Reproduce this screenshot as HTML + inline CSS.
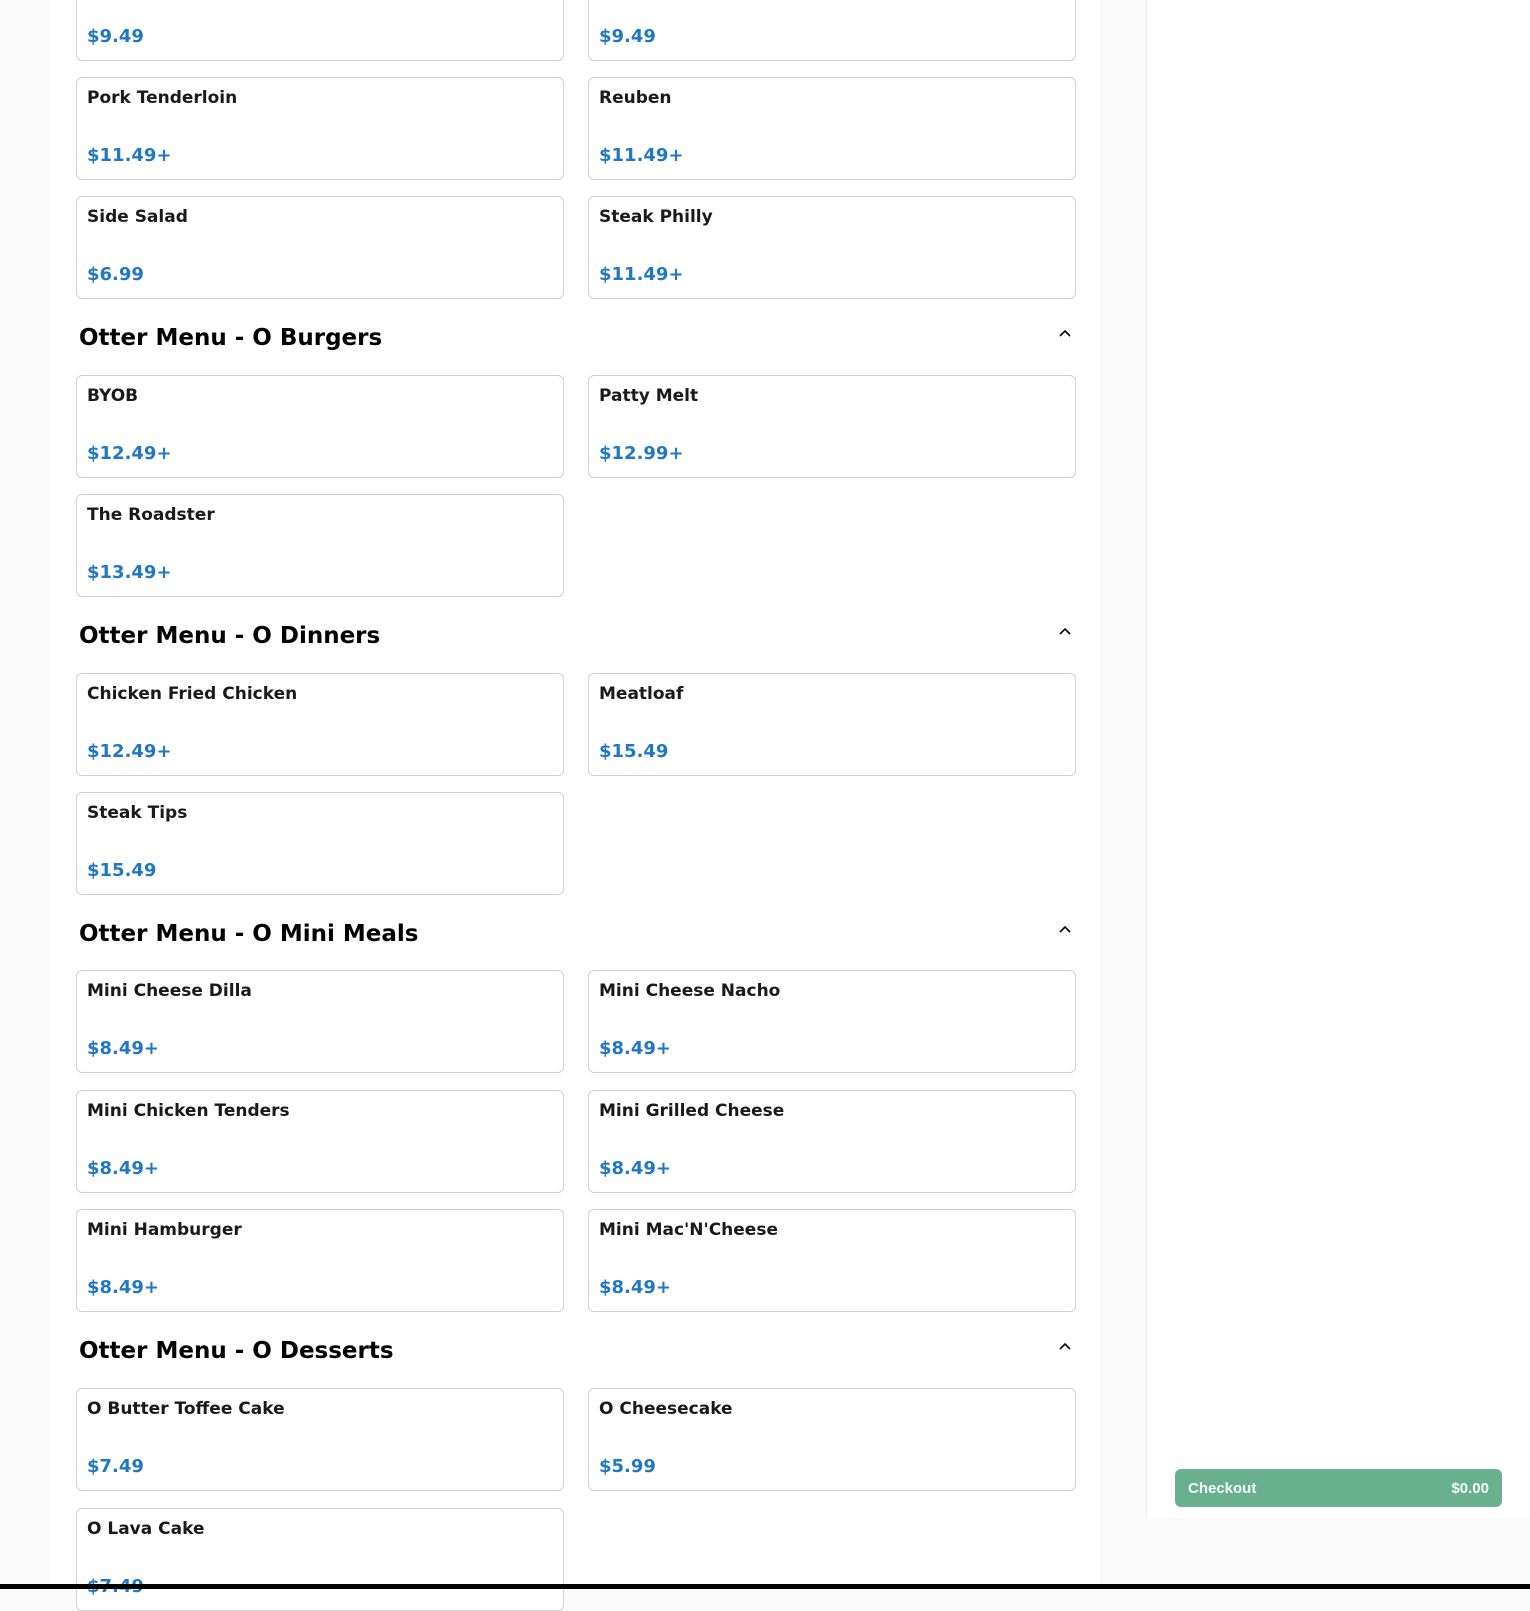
<!DOCTYPE html>
<html><head><meta charset="utf-8"><style>
*{box-sizing:border-box;margin:0;padding:0}
body{width:1530px;height:1589px;background:#fafafa;position:relative;overflow:hidden;font-family:"DejaVu Sans","Liberation Sans",sans-serif}
.main{position:absolute;left:51px;top:0;width:1049px;height:1589px;background:#fff}
.side{position:absolute;left:1146px;top:0;width:384px;height:1518px;background:#fff;border-left:1px solid #f0f0f0}
.card{position:absolute;width:488px;height:103px;border:1px solid #d0d0d0;border-radius:6px;background:#fff}
.card .t{position:absolute;left:10px;top:10px;font-weight:bold;font-size:17px;color:#1a1a1a}
.card .p{position:absolute;left:10px;top:67px;font-weight:bold;font-size:18px;color:#1f77c6}
.h{position:absolute;left:79px;font-weight:bold;font-size:23px;color:#000}
.chev{position:absolute;left:1058px;width:14px;height:10px}
.btn{position:absolute;left:1175px;top:1469px;width:327px;height:38px;background:#68b08e;border-radius:6px;color:#f4fbf7;font-family:"Liberation Sans",sans-serif;font-weight:bold;font-size:15px;display:flex;justify-content:space-between;align-items:center;padding:0 13px}
.bar{position:absolute;left:0;top:1584px;width:1530px;height:5px;background:#000}
</style></head><body>
<div class="main"></div>
<div class="side"></div>

<div class="card" style="left:76px;top:-42px"><div class="p">$9.49</div></div>
<div class="card" style="left:588px;top:-42px"><div class="p">$9.49</div></div>
<div class="card" style="left:76px;top:77px"><div class="t">Pork Tenderloin</div><div class="p">$11.49+</div></div>
<div class="card" style="left:588px;top:77px"><div class="t">Reuben</div><div class="p">$11.49+</div></div>
<div class="card" style="left:76px;top:196px"><div class="t">Side Salad</div><div class="p">$6.99</div></div>
<div class="card" style="left:588px;top:196px"><div class="t">Steak Philly</div><div class="p">$11.49+</div></div>

<div class="h" style="top:325px">Otter Menu - O Burgers</div>
<svg class="chev" style="top:328px" viewBox="0 0 14 10"><path d="M2 8 L7 3 L12 8" fill="none" stroke="#000" stroke-width="1.6"/></svg>
<div class="card" style="left:76px;top:375px"><div class="t">BYOB</div><div class="p">$12.49+</div></div>
<div class="card" style="left:588px;top:375px"><div class="t">Patty Melt</div><div class="p">$12.99+</div></div>
<div class="card" style="left:76px;top:494px"><div class="t">The Roadster</div><div class="p">$13.49+</div></div>

<div class="h" style="top:623px">Otter Menu - O Dinners</div>
<svg class="chev" style="top:626px" viewBox="0 0 14 10"><path d="M2 8 L7 3 L12 8" fill="none" stroke="#000" stroke-width="1.6"/></svg>
<div class="card" style="left:76px;top:673px"><div class="t">Chicken Fried Chicken</div><div class="p">$12.49+</div></div>
<div class="card" style="left:588px;top:673px"><div class="t">Meatloaf</div><div class="p">$15.49</div></div>
<div class="card" style="left:76px;top:792px"><div class="t">Steak Tips</div><div class="p">$15.49</div></div>

<div class="h" style="top:921px">Otter Menu - O Mini Meals</div>
<svg class="chev" style="top:924px" viewBox="0 0 14 10"><path d="M2 8 L7 3 L12 8" fill="none" stroke="#000" stroke-width="1.6"/></svg>
<div class="card" style="left:76px;top:970px"><div class="t">Mini Cheese Dilla</div><div class="p">$8.49+</div></div>
<div class="card" style="left:588px;top:970px"><div class="t">Mini Cheese Nacho</div><div class="p">$8.49+</div></div>
<div class="card" style="left:76px;top:1090px"><div class="t">Mini Chicken Tenders</div><div class="p">$8.49+</div></div>
<div class="card" style="left:588px;top:1090px"><div class="t">Mini Grilled Cheese</div><div class="p">$8.49+</div></div>
<div class="card" style="left:76px;top:1209px"><div class="t">Mini Hamburger</div><div class="p">$8.49+</div></div>
<div class="card" style="left:588px;top:1209px"><div class="t">Mini Mac'N'Cheese</div><div class="p">$8.49+</div></div>

<div class="h" style="top:1338px">Otter Menu - O Desserts</div>
<svg class="chev" style="top:1341px" viewBox="0 0 14 10"><path d="M2 8 L7 3 L12 8" fill="none" stroke="#000" stroke-width="1.6"/></svg>
<div class="card" style="left:76px;top:1388px"><div class="t">O Butter Toffee Cake</div><div class="p">$7.49</div></div>
<div class="card" style="left:588px;top:1388px"><div class="t">O Cheesecake</div><div class="p">$5.99</div></div>
<div class="card" style="left:76px;top:1508px"><div class="t">O Lava Cake</div><div class="p">$7.49</div></div>

<div class="btn"><span>Checkout</span><span>$0.00</span></div>
<div class="bar"></div>
</body></html>
